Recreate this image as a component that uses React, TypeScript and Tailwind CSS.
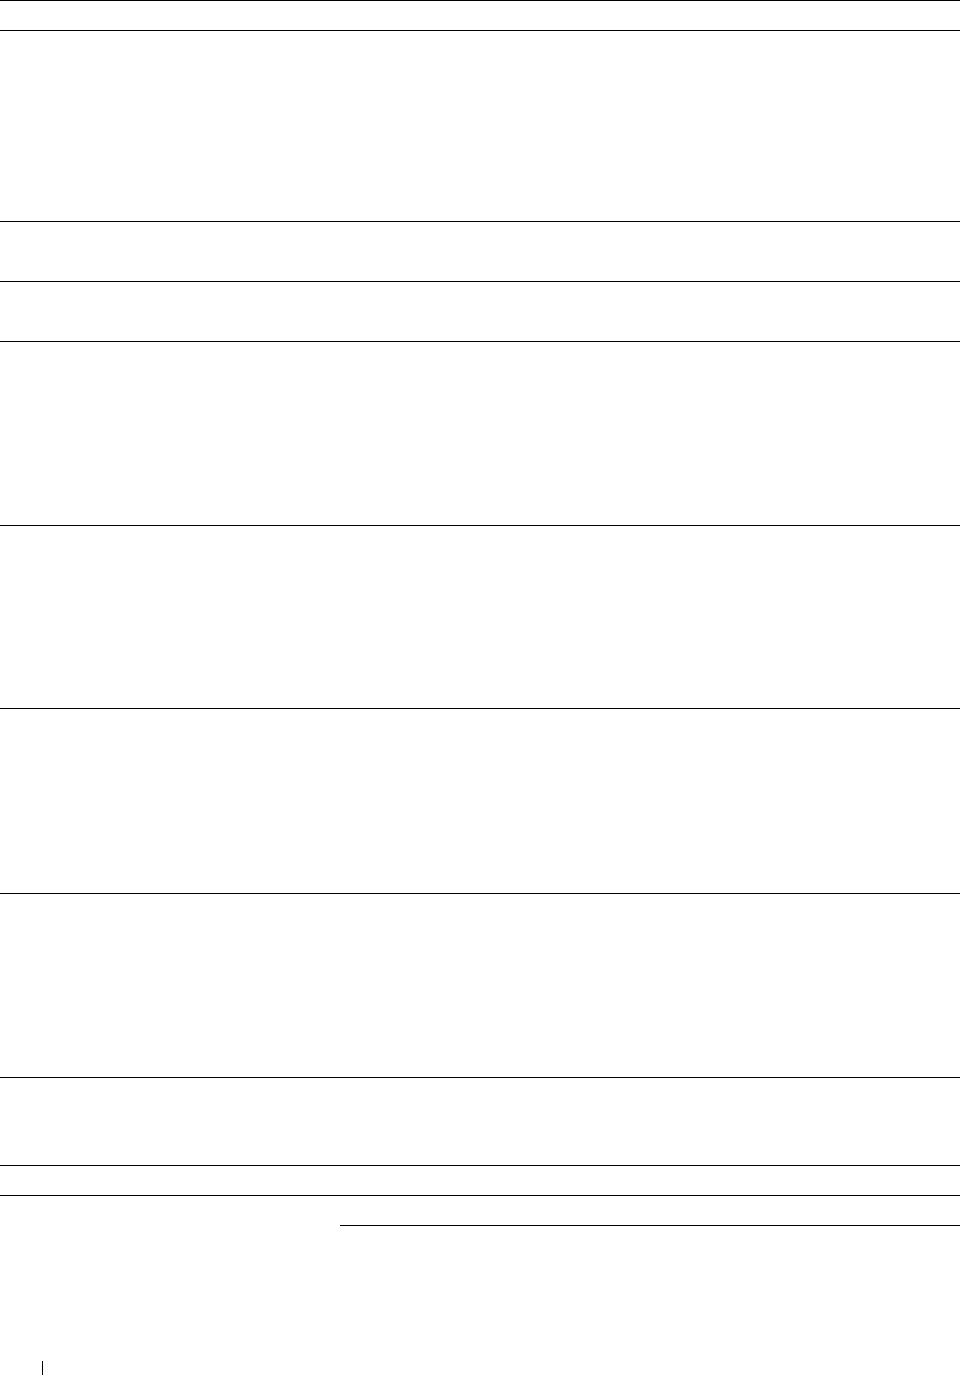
export default function App() {
  const rows = [30, 191, 60, 60, 184, 183, 185, 184, 88, 30];
  return (
    <div className="w-[960px] h-[1375px] bg-white flex flex-col" style={{ fontFamily: '"Liberation Sans", sans-serif' }}>
      {rows.map((h, i) => (
        <div key={i} className="w-full border-t border-black shrink-0" style={{ height: h }} />
      ))}
      <div className="w-full border-t border-black h-[30px] shrink-0" />
      <div className="ml-[340px] border-t border-black h-[136px] shrink-0" />
      <div className="ml-[42px] w-px h-[14px] bg-black shrink-0" />
    </div>
  );
}
